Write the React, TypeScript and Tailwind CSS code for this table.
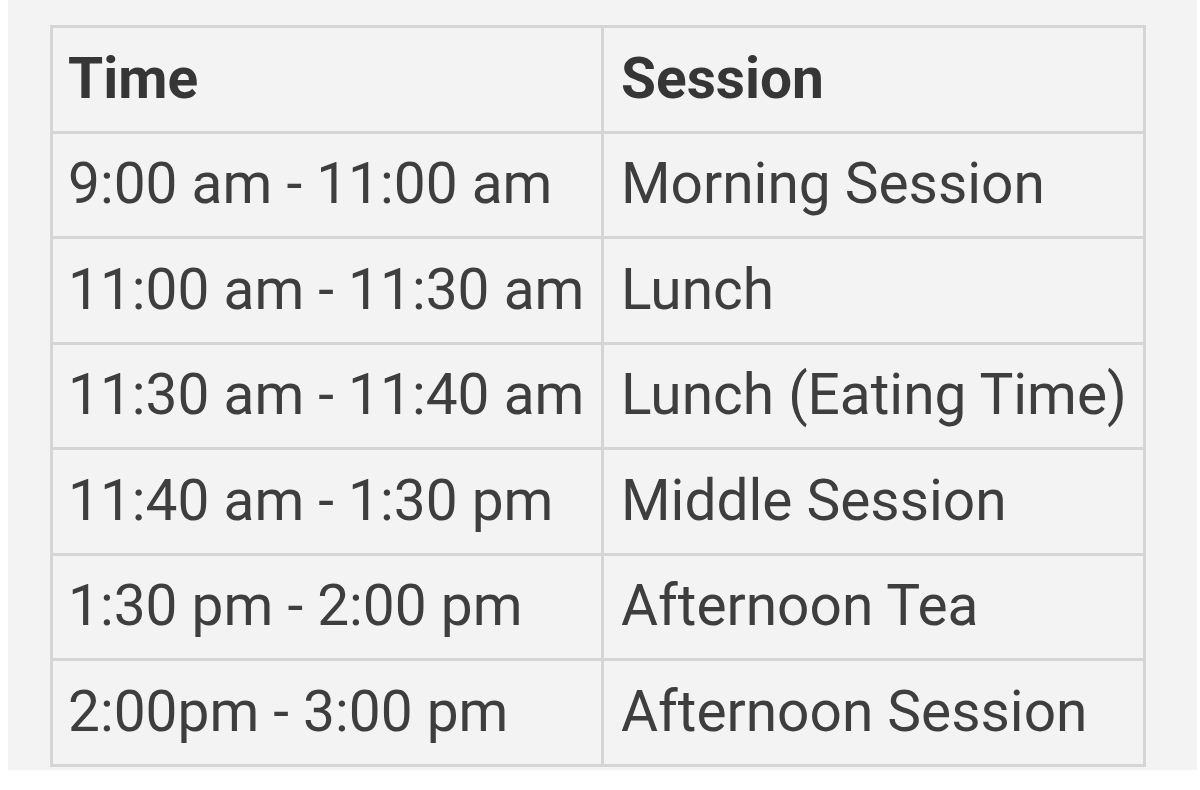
import React from "react";

const rows: [string, string][] = [
  ["9:00 am - 11:00 am", "Morning Session"],
  ["11:00 am - 11:30 am", "Lunch"],
  ["11:30 am - 11:40 am", "Lunch (Eating Time)"],
  ["11:40 am - 1:30 pm", "Middle Session"],
  ["1:30 pm - 2:00 pm", "Afternoon Tea"],
  ["2:00pm - 3:00 pm", "Afternoon Session"],
];

export default function App() {
  return (
    <div className="w-[1200px] h-[790px] bg-white" style={{ fontFamily: "Roboto, 'Noto Sans', sans-serif" }}>
      <div className="ml-[8px] w-[1189px] h-[770px] bg-[#f3f3f3] pt-[25px] pl-[42px]">
        <table className="border-collapse text-[56.8px] text-[#3e3e3e] leading-none">
          <thead>
            <tr>
              <th className="w-[551px] h-[105.5px] border-[3px] border-[#d5d5d5] text-left font-bold pl-[15px] align-middle text-[#363636]">Time</th>
              <th className="w-[542px] h-[105.5px] border-[3px] border-[#d5d5d5] text-left font-bold pl-[17px] align-middle text-[#363636]">Session</th>
            </tr>
          </thead>
          <tbody>
            {rows.map(([t, s]) => (
              <tr key={t}>
                <td className="h-[105.5px] border-[3px] border-[#d5d5d5] pl-[15px] align-middle whitespace-nowrap">{t}</td>
                <td className="h-[105.5px] border-[3px] border-[#d5d5d5] pl-[17px] align-middle whitespace-nowrap">{s}</td>
              </tr>
            ))}
          </tbody>
        </table>
      </div>
    </div>
  );
}
